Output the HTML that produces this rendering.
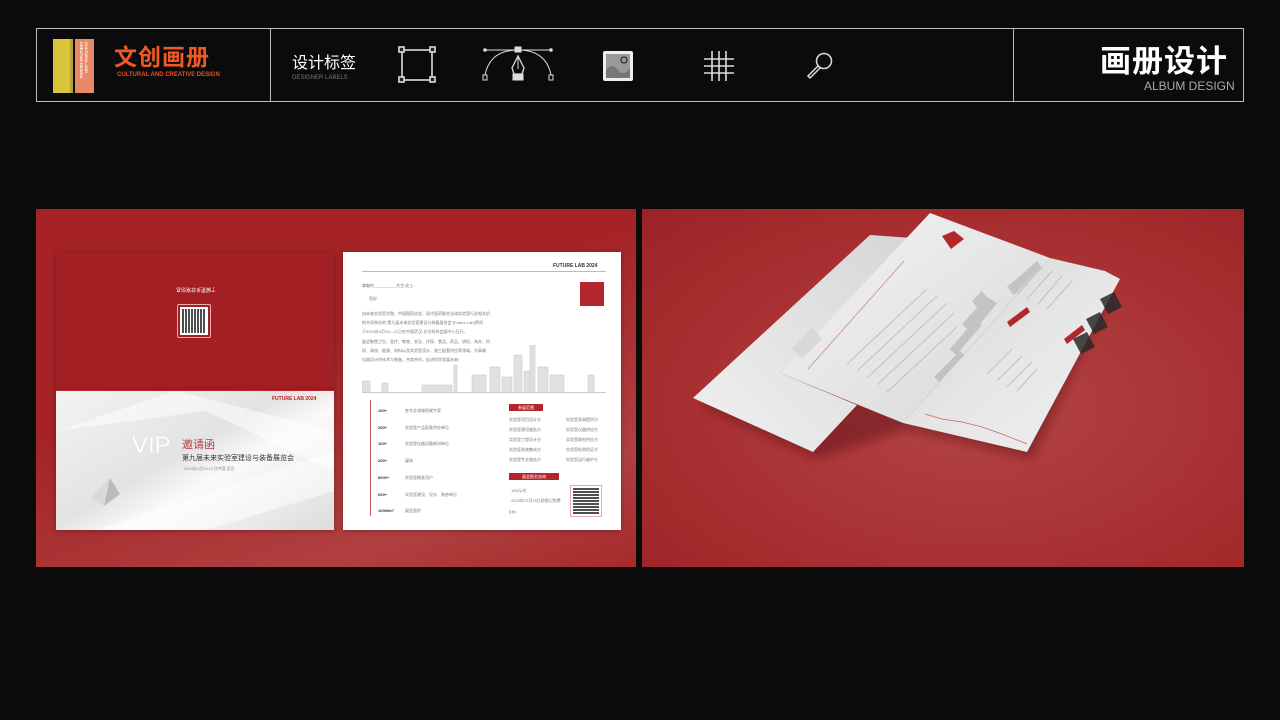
<!DOCTYPE html>
<html><head><meta charset="utf-8"><style>
*{margin:0;padding:0;box-sizing:border-box}
body{width:1280px;height:720px;background:#0b0b0d;position:relative;overflow:hidden;font-family:"Liberation Sans","Noto Sans CJK SC",sans-serif}
.a{position:absolute}
.t{font-size:4px;color:#777;white-space:nowrap}
</style></head><body>
<!-- header -->
<div class="a" style="left:36px;top:28px;width:1208px;height:74px;border:1px solid #bdbdbd"></div>
<div class="a" style="left:270px;top:29px;width:1px;height:72px;background:#bdbdbd"></div>
<div class="a" style="left:1013px;top:29px;width:1px;height:72px;background:#bdbdbd"></div>
<div class="a" style="left:53px;top:39px;width:20px;height:54px;background:#d8c53c;border-right:3px solid #b7a52c"></div>
<div class="a" style="left:75px;top:39px;width:19px;height:54px;background:#e88a68"></div>
<div class="a" style="left:79px;top:42px;font-size:4px;color:#fff;writing-mode:vertical-rl;line-height:5px;font-weight:bold">CULTURAL AND<br>CREATIVE DESIGN</div>
<div class="a" style="left:114px;top:38px;font-size:23px;font-weight:bold;color:#f05a22;letter-spacing:1px">文创画册</div>
<div class="a" style="left:117px;top:72px;font-size:6px;font-weight:bold;color:#e0551e">CULTURAL AND CREATIVE DESIGN</div>
<div class="a" style="left:292px;top:49px;font-size:16px;color:#fff">设计标签</div>
<div class="a" style="left:292px;top:75px;font-size:6px;color:#777">DESIGNER LABELS</div>
<svg class="a" style="left:395px;top:44px" width="45" height="40" viewBox="0 0 45 40" fill="none" stroke="#ddd" stroke-width="1.6">
<rect x="7" y="6" width="30" height="30"/><rect x="4" y="3" width="5" height="5" fill="#222"/><rect x="35" y="3" width="5" height="5" fill="#222"/><rect x="4" y="33" width="5" height="5" fill="#222"/><rect x="35" y="33" width="5" height="5" fill="#222"/></svg>
<svg class="a" style="left:478px;top:44px" width="80" height="40" viewBox="0 0 80 40" fill="none" stroke="#ddd" stroke-width="1">
<line x1="7" y1="6" x2="73" y2="6"/><circle cx="7" cy="6" r="1.3" fill="#ddd"/><circle cx="73" cy="6" r="1.3" fill="#ddd"/>
<path d="M7 31 Q12 6 40 6 Q68 6 73 31"/><rect x="37" y="3" width="6" height="5" fill="#ddd"/>
<rect x="5" y="31" width="4" height="5"/><rect x="71" y="31" width="4" height="5"/>
<path d="M40 12 L34 24 L36 30 L44 30 L46 24 Z" stroke-width="1.3"/><line x1="40" y1="12" x2="40" y2="25"/><rect x="35" y="30" width="10" height="6" fill="#ddd"/></svg>
<svg class="a" style="left:602px;top:50px" width="32" height="32" viewBox="0 0 32 32"><rect x="1" y="1" width="30" height="30" rx="2" fill="#eee"/><rect x="4" y="4" width="24" height="24" fill="#999"/><path d="M4 20 Q10 12 16 20 Q22 27 28 18 L28 28 L4 28Z" fill="#777"/><circle cx="22" cy="10" r="3" fill="none" stroke="#333" stroke-width="1.3"/></svg>
<svg class="a" style="left:703px;top:50px" width="32" height="32" viewBox="0 0 32 32" stroke="#ddd" stroke-width="1.6"><line x1="9" y1="1" x2="9" y2="31"/><line x1="16" y1="1" x2="16" y2="31"/><line x1="23" y1="1" x2="23" y2="31"/><line x1="1" y1="9" x2="31" y2="9"/><line x1="1" y1="16" x2="31" y2="16"/><line x1="1" y1="23" x2="31" y2="23"/></svg>
<svg class="a" style="left:804px;top:50px" width="32" height="32" viewBox="0 0 32 32" fill="none" stroke="#ddd" stroke-width="1.5"><circle cx="20" cy="11" r="7.5"/><path d="M14 16 L4 26 L6 28 L16 18"/></svg>
<div class="a" style="left:1100px;top:36px;font-size:31px;font-weight:bold;color:#fff;letter-spacing:1px">画册设计</div>
<div class="a" style="left:1144px;top:79px;font-size:12px;color:#aaa">ALBUM DESIGN</div>

<!-- left mockup -->
<div class="a" style="left:36px;top:209px;width:600px;height:358px;background:linear-gradient(160deg,#a52327 40%,#b0403f 80%,#a62a2c)"></div>
<div class="a" style="left:56px;top:252px;width:278px;height:139px;background:#a21f24;box-shadow:0 1px 6px rgba(0,0,0,.3)"></div>
<div class="a" style="left:176px;top:286px;font-size:5px;color:#fff;transform:rotate(180deg)">了解更多非常信息</div>
<div class="a" style="left:177px;top:304px;width:34px;height:34px;border:1px solid #e7b0b0;border-radius:2px"></div>
<div class="a" style="left:180px;top:307px;width:28px;height:28px;background:#fff;padding:2px"><div style="width:100%;height:100%;background:repeating-linear-gradient(90deg,#222 0 2px,#fff 2px 3px),#222;opacity:.8"></div></div>
<div class="a" style="left:56px;top:390px;width:278px;height:140px;background:linear-gradient(150deg,#f3f3f3,#e3e3e3 45%,#fafafa 60%,#dcdcdc);border-top:1px solid #c0262b;box-shadow:0 1px 5px rgba(0,0,0,.3)"></div>
<svg class="a" style="left:56px;top:391px" width="278" height="139"><polygon points="0,40 120,0 278,40 278,80 150,20" fill="#fff" opacity=".5"/><polygon points="40,139 278,60 278,100 150,139" fill="#fff" opacity=".5"/><polygon points="34,107 54,87 48,115" fill="#d9d9d9"/><polygon points="54,87 64,103 48,115" fill="#bbb"/></svg>
<div class="a" style="left:272px;top:396px;font-size:5px;color:#b22;font-weight:bold">FUTURE LAB 2024</div>
<div class="a" style="left:132px;top:432px;font-size:24px;color:#fff;text-shadow:0 0 1px #ccc">VIP</div>
<div class="a" style="left:182px;top:436px;font-size:11px;color:#c0393c">邀请函</div>
<div class="a" style="left:182px;top:453px;font-size:7px;color:#333">第九届未来实验室建设与装备展览会</div>
<div class="a" style="left:184px;top:466px;font-size:4px;color:#888">2024年4月19-21日中国·武汉</div>

<div class="a" style="left:343px;top:252px;width:278px;height:278px;background:#fff;box-shadow:0 1px 5px rgba(0,0,0,.3)"></div>
<div class="a" style="left:553px;top:263px;font-size:5px;color:#333;font-weight:bold">FUTURE LAB 2024</div>
<div class="a" style="left:362px;top:271px;width:244px;height:1px;background:#e2aaaa"></div>
<div class="a" style="left:580px;top:282px;width:24px;height:24px;background:#b3272c"></div>
<div class="a t" style="left:362px;top:283px">尊敬的__________先生/女士:</div>
<div class="a t" style="left:369px;top:296px">您好:</div>
<div class="a t" style="left:362px;top:309px;line-height:9px">由未来实验室学院、中国国药协会、现代医药联合全球实验室行业相关机<br>构共同举办的"第九届未来实验室建设与装备展览会"(Future Lab)将同<br>于2024年4月19—21日在中国武汉·光谷科技会展中心召开。</div>
<div class="a t" style="left:362px;top:337px;line-height:9px">展会聚焦卫生、医疗、教育、农业、环保、食品、药品、质检、海关、科<br>研、高校、能源、材料以及实验室设计、施工配套供应等领域，为高端<br>仪器设计的技术与装备，共商合作，促进科学发展未来!</div>
<svg class="a" style="left:362px;top:345px" width="244" height="48"><g fill="#e0e0e0" stroke="#c8c8c8" stroke-width=".5"><rect x="0" y="36" width="8" height="12"/><rect x="20" y="38" width="6" height="10"/><rect x="60" y="40" width="30" height="8"/><rect x="92" y="20" width="3" height="28"/><rect x="110" y="30" width="14" height="18"/><rect x="128" y="22" width="10" height="26"/><rect x="140" y="32" width="10" height="16"/><rect x="152" y="10" width="8" height="38"/><rect x="162" y="26" width="8" height="22"/><rect x="168" y="0" width="5" height="48"/><rect x="176" y="22" width="10" height="26"/><rect x="188" y="30" width="14" height="18"/><rect x="226" y="30" width="6" height="18"/></g><line x1="0" y1="47.5" x2="244" y2="47.5" stroke="#ccc"/></svg>
<div class="a" style="left:370px;top:400px;width:1px;height:116px;background:#c55"></div>
<div class="a" style="left:378px;top:403px;font-size:4px;line-height:16.7px;color:#333;font-weight:bold">100+<br>200+<br>100+<br>200+<br>8000+<br>600+<br>10000m²</div>
<div class="a t" style="left:405px;top:403px;line-height:16.7px">各专业领域权威专家<br>实验室产品配套供应单位<br>实验室仪器设备耗材单位<br>媒体<br>实验室精准用户<br>实验室建设、设计、装修单位<br>展会面积</div>
<div class="a" style="left:509px;top:404px;width:34px;height:7px;background:#b3272c;font-size:4px;color:#fff;text-align:center;line-height:7px">参展范围</div>
<div class="a t" style="left:509px;top:415px;line-height:10px">实验室项目设计方<br>实验室建设服务方<br>实验室工程设计方<br>实验室系统集成方<br>实验室专业服务方</div>
<div class="a t" style="left:566px;top:415px;line-height:10px">实验室家具提供方<br>实验室仪器供应方<br>实验室耗材供应方<br>实验室检测验证方<br>实验室运行维护方</div>
<div class="a" style="left:509px;top:473px;width:50px;height:7px;background:#b3272c;font-size:4px;color:#fff;text-align:center;line-height:7px">展会报名咨询</div>
<div class="a t" style="left:511px;top:486px;line-height:10px">199元/位<br>2023年12月20日前登记免费</div>
<div class="a" style="left:509px;top:509px;font-size:7px;color:#b3272c">›››</div>
<div class="a" style="left:570px;top:485px;width:32px;height:32px;background:#fff;border:1px solid #e2aaaa;padding:2px"><div style="width:100%;height:100%;background:repeating-linear-gradient(0deg,#222 0 2px,#fff 2px 3px);opacity:.8"></div></div>

<!-- right mockup -->
<div class="a" style="left:642px;top:209px;width:602px;height:358px;background:radial-gradient(ellipse at 55% 55%,#b34546,#a52a2c 75%,#9c2226)"></div>
<svg class="a" style="left:642px;top:209px" width="602" height="358">
<defs><filter id="s"><feGaussianBlur stdDeviation="5"/></filter>
<linearGradient id="g1" x1="0" y1="1" x2="1" y2="0"><stop offset="0" stop-color="#f0f0f0"/><stop offset="1" stop-color="#d6d6d6"/></linearGradient>
<linearGradient id="g2" x1="0" y1="0" x2="1" y2="1"><stop offset="0" stop-color="#d2d2d2"/><stop offset=".5" stop-color="#e6e6e6"/><stop offset="1" stop-color="#f0f0f0"/></linearGradient>
<linearGradient id="g3" x1="0" y1="0" x2="1" y2="1"><stop offset="0" stop-color="#f4f4f4"/><stop offset="1" stop-color="#d8d8d8"/></linearGradient></defs>
<polygon points="58,196 175,250 265,220 390,250 470,80 300,40" fill="#5a1012" opacity=".45" filter="url(#s)"/>
<polygon points="51,189 228,26 271,29 138,164 215,196 171,243" fill="url(#g1)"/>
<polygon points="138,164 288,4 408,49 261,214" fill="url(#g3)"/>
<polygon points="261,214 408,49 463,62 478,70 385,243" fill="url(#g2)"/>
<line x1="166" y1="160" x2="262" y2="52" stroke="#c77" stroke-width=".6"/>
<polygon points="300,27 312,22 322,30 309,40" fill="#b3272c"/>
<g fill="#aaa" opacity=".55"><polygon points="330,92 340,82 346,90 336,100"/><polygon points="320,115 345,88 355,94 330,125"/><polygon points="308,140 332,112 340,116 314,146"/><polygon points="365,78 395,52 399,58 372,86"/><polygon points="292,168 318,142 322,146 297,173"/></g>
<g stroke="#b5b5b5" stroke-width=".8"><line x1="205" y1="155" x2="285" y2="80"/><line x1="215" y1="162" x2="295" y2="87"/><line x1="225" y1="169" x2="305" y2="94"/><line x1="235" y1="176" x2="312" y2="104"/><line x1="245" y1="183" x2="315" y2="118"/></g>
<g stroke="#b5b5b5" stroke-width=".8"><line x1="375" y1="85" x2="400" y2="58"/><line x1="385" y1="90" x2="410" y2="62"/><line x1="395" y1="96" x2="420" y2="67"/><line x1="405" y1="100" x2="430" y2="72"/><line x1="345" y1="165" x2="370" y2="140"/><line x1="355" y1="172" x2="380" y2="147"/><line x1="365" y1="178" x2="390" y2="153"/><line x1="375" y1="182" x2="395" y2="160"/></g>
<polyline points="283,205 300,210 320,213 340,218 360,225 385,235" fill="none" stroke="#c66" stroke-width=".8"/>
<g fill="#2a2a2a" opacity=".85"><polygon points="458,90 472,83 480,98 466,105"/><polygon points="444,110 458,103 466,118 452,125"/><polygon points="431,130 445,123 453,138 439,145"/></g>
<polygon points="365,113 385,98 388,103 368,118" fill="#b3272c"/>
<polygon points="422,130 440,116 443,121 425,135" fill="#b3272c"/>
<polygon points="150,140 170,118 180,130 160,150" fill="#d5d5d5" opacity=".8"/>
</svg>
</body></html>
